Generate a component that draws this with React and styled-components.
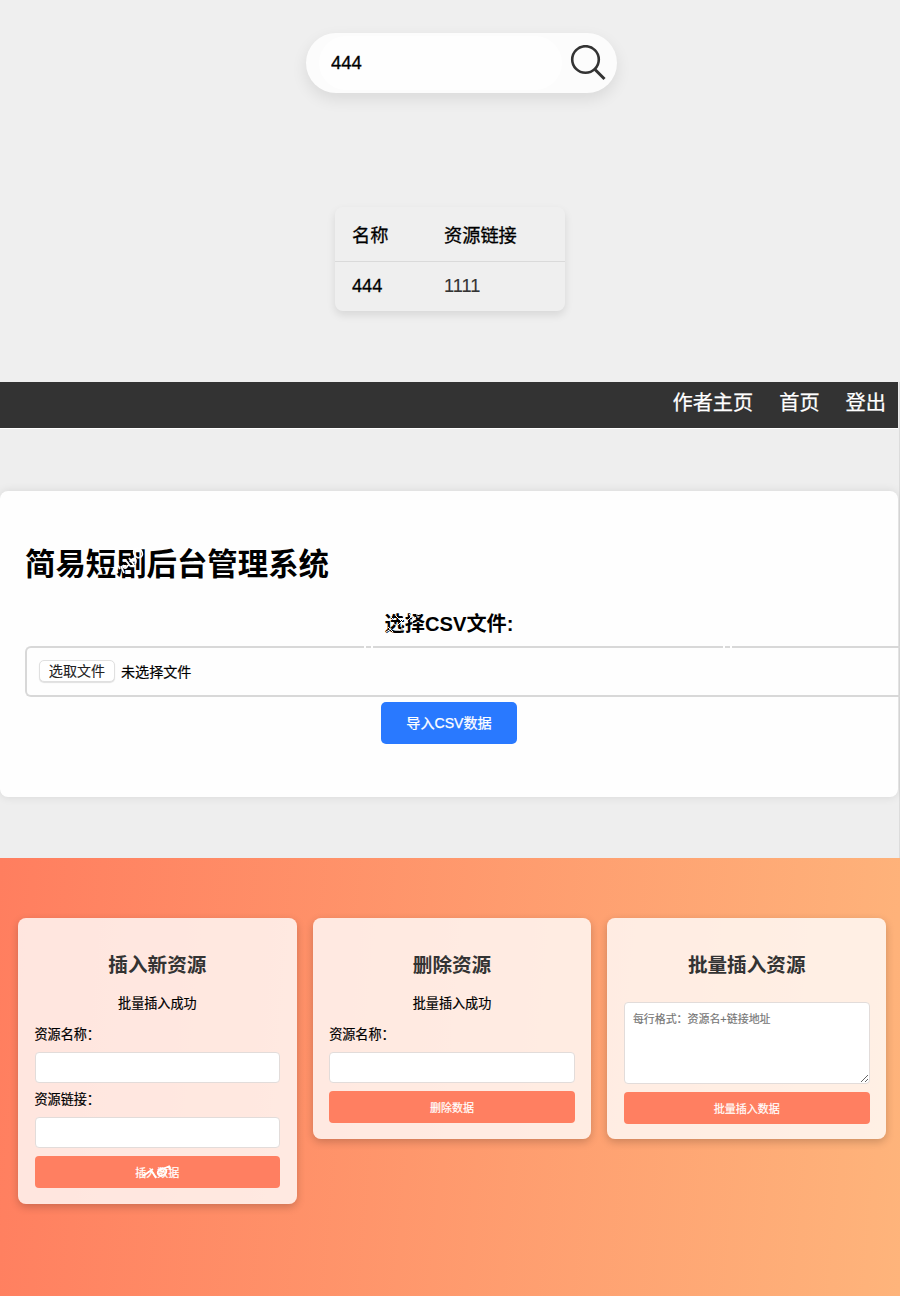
import React from 'react';
import styled, { createGlobalStyle } from 'styled-components';

const Global = createGlobalStyle`
  * { box-sizing: border-box; }
  body { margin: 0; background: #efefef; font-family: "Liberation Sans", "Noto Sans CJK SC", sans-serif; color: #000; }
  h1, h2, p { margin: 0; }
  input, button, textarea { font-family: inherit; }
`;

const Page = styled.main`
  width: 900px;
  height: 1296px;
  overflow: hidden;
`;

const SearchSection = styled.section`
  height: 382px;
  padding-top: 33px;
  background: #efefef;
`;

const SearchBar = styled.div`
  width: 311px;
  height: 60px;
  margin-left: 306px;
  padding: 0 11px 0 13px;
  display: flex;
  align-items: center;
  justify-content: space-between;
  border-radius: 30px;
  background: #fcfcfc;
  box-shadow: 0 6px 16px rgba(0, 0, 0, 0.09);
`;

const SearchInput = styled.input`
  width: 243px;
  height: 54px;
  border: 0;
  outline: 0;
  border-radius: 27px;
  padding: 0 12px;
  background: #fefefe;
  font-size: 18.5px;
  -webkit-text-stroke: 0.3px #000;
`;

const SearchIcon = styled.svg`
  width: 36px;
  height: 36px;
  fill: none;
  stroke: #333;
  stroke-width: 2.6;
`;

const ResultTable = styled.div`
  width: 230px;
  margin: 114px 0 0 335px;
  border-radius: 8px;
  box-shadow: 0 4px 8px rgba(0, 0, 0, 0.1);
`;

const ResultRow = styled.div`
  display: grid;
  grid-template-columns: 92px 1fr;
  align-items: center;
  height: ${p => (p.$head ? 55 : 49)}px;
  padding: 0 0 1px 17px;
  border-bottom: ${p => (p.$head ? '1px solid #dadada' : '0')};
  font-size: 18.2px;
`;

const Cell = styled.span`
  color: ${p => (p.$soft ? '#333' : '#000')};
  -webkit-text-stroke: ${p => (p.$soft ? '0.1px #333' : '0.3px #000')};
`;

const AdminSection = styled.section`
  height: 476px;
  padding-right: 1px;
  border-right: 1px solid #dcdcdc;
  background: #eee;
`;

const NavBar = styled.nav`
  height: 47px;
  display: flex;
  justify-content: flex-end;
  gap: 26px;
  padding: 6px 12px 0 0;
  border-bottom: 1px solid #fff;
  background: #333;
  color: #fff;
  font-size: 20.2px;
  line-height: 30px;
  -webkit-text-stroke: 0.25px #fff;
`;

const AdminPanel = styled.div`
  height: 306px;
  margin-top: 62px;
  padding: 48px 0 0 25px;
  border-radius: 8px;
  background: #fefefe;
  box-shadow: 0 0 10px rgba(0, 0, 0, 0.1);
`;

const AdminTitle = styled.h1`
  position: relative;
  font-size: 30.4px;
  line-height: 50px;
  height: 48px;
`;

const CsvForm = styled.div`
  display: flex;
  flex-direction: column;
  align-items: center;
  margin-top: 22px;
`;

const CsvLabel = styled.label`
  position: relative;
  margin-right: 25px;
  font-size: 20.2px;
  font-weight: 700;
  line-height: 30px;
`;

const FileField = styled.div`
  position: relative;
  align-self: stretch;
  display: flex;
  align-items: center;
  height: 51px;
  margin: 7px -2px 5px 0;
  padding: 0 0 1px 12px;
  border: 2px solid #d8d8d8;
  border-right: 0;
  border-radius: 6px 0 0 6px;
  font-size: 14.1px;
  -webkit-text-stroke: 0.2px #000;
`;

const FileButton = styled.button`
  width: 76px;
  height: 22px;
  margin-right: 6px;
  padding: 0;
  border: 1px solid #e0e0e0;
  border-radius: 5px;
  background: #fff;
  box-shadow: 0 1px 1px rgba(0, 0, 0, 0.12);
  font-size: 14.1px;
  line-height: 20px;
  color: #222;
  -webkit-text-stroke: 0.1px #222;
`;

const ImportButton = styled.button`
  width: 136px;
  height: 42px;
  margin-right: 25px;
  padding: 0 0 2px;
  border: 0;
  border-radius: 5px;
  background: #2979ff;
  color: #fff;
  font-size: 14.1px;
  -webkit-text-stroke: 0.25px #fff;
`;

const ManageSection = styled.section`
  height: 438px;
  display: flex;
  align-items: flex-start;
  gap: 16px;
  padding: 60px 0 0 18px;
  background: linear-gradient(95deg, #ff7e5f, #feb47b);
`;

const Card = styled.article`
  width: 278.7px;
  height: ${p => p.$height}px;
  padding: 31px 16.5px 0;
  display: flex;
  flex-direction: column;
  border-radius: 8px;
  background: rgba(255, 255, 255, 0.8);
  box-shadow: 0 3px 8px rgba(0, 0, 0, 0.2);
`;

const CardTitle = styled.h2`
  color: #333;
  text-align: center;
  font-size: 19.6px;
  line-height: 32px;
`;

const Message = styled.p`
  height: 20px;
  margin: 13px 0 11px;
  text-align: center;
  font-size: 13.1px;
  line-height: 20px;
  -webkit-text-stroke: 0.2px #000;
`;

const FieldLabel = styled.label`
  height: 20px;
  font-size: 13.1px;
  line-height: 20px;
  -webkit-text-stroke: 0.2px #000;
`;

const TextInput = styled.input`
  flex: none;
  width: 100%;
  height: 31px;
  margin: 7px 0 ${p => p.$after}px;
  border: 1px solid #e2dcda;
  border-radius: 4px;
  background: #fff;
`;

const BatchInput = styled.textarea`
  flex: none;
  width: 100%;
  height: 82px;
  margin: 21px 0 8px;
  padding: 8px;
  border: 1px solid #e2dcda;
  border-radius: 4px;
  background: #fff;
  font-size: 10.95px;
  line-height: 16px;
  &::placeholder { color: #757575; -webkit-text-stroke: 0.15px #757575; }
`;

const ActionButton = styled.button`
  position: relative;
  flex: none;
  width: 100%;
  height: 32px;
  padding: 0 0 1px;
  border: 0;
  border-radius: 4px;
  background: #ff7f61;
  color: #fff;
  font-size: 11px;
  -webkit-text-stroke: 0.2px #fff;
`;

const Scratch = styled.svg`
  position: absolute;
  left: ${p => p.$x}px;
  top: ${p => p.$y}px;
  fill: none;
  stroke: #fff;
  stroke-width: ${p => p.$weight || 1.8};
`;

const BorderGap = styled.i`
  position: absolute;
  top: -2px;
  left: ${p => p.$x}px;
  width: 9px;
  height: 2px;
  border: solid #fefefe;
  border-width: 0 2px;
`;

export default function App() {
  return (
    <Page>
      <Global />
      <SearchSection>
        <SearchBar>
          <SearchInput defaultValue="444" />
          <SearchIcon viewBox="0 0 36 36">
            <circle cx="15.5" cy="14.5" r="13.3" />
            <path d="M25 24.5 34.5 34" strokeWidth="3" />
          </SearchIcon>
        </SearchBar>
        <ResultTable>
          <ResultRow $head><Cell>名称</Cell><Cell>资源链接</Cell></ResultRow>
          <ResultRow><Cell>444</Cell><Cell $soft>1111</Cell></ResultRow>
        </ResultTable>
      </SearchSection>
      <AdminSection>
        <NavBar><span>作者主页</span><span>首页</span><span>登出</span></NavBar>
        <AdminPanel>
          <AdminTitle>
            简易短剧后台管理系统
            <Scratch $x={82} $y={7} width="44" height="34" viewBox="0 0 44 34">
              <path d="M4 27l4 1M8 24l3 3M13 23l-2-4M14 20l3 7M16 15c3-2 5 2 7 5M17 19c-2 3 2 5 4 0M22 12l5 7M23 16c3-6 8-3 5 2" />
              <ellipse cx="31" cy="7" rx="4" ry="5" transform="rotate(-35 31 7)" />
            </Scratch>
          </AdminTitle>
          <CsvForm>
            <CsvLabel>
              选择CSV文件:
              <Scratch $x={0} $y={0} $weight={1} width="42" height="30" viewBox="0 0 42 30">
                <path d="M1 23l5-3M3 18l5 5M8 14l4 3M6 8l3 3M11 7l6 6M13 16l6-6M12 20l3 1M17 6l6 8M19 15l7-7M24 5l4 5M27 13l4-5M31 6l5-1M16 19l5 1" />
              </Scratch>
            </CsvLabel>
            <FileField>
              <FileButton>选取文件</FileButton><span>未选择文件</span>
              <BorderGap $x={337} /><BorderGap $x={696} />
            </FileField>
            <ImportButton>导入CSV数据</ImportButton>
          </CsvForm>
        </AdminPanel>
      </AdminSection>
      <ManageSection>
        <Card $height={286}>
          <CardTitle>插入新资源</CardTitle>
          <Message>批量插入成功</Message>
          <FieldLabel>资源名称：</FieldLabel>
          <TextInput $after={7} />
          <FieldLabel>资源链接：</FieldLabel>
          <TextInput $after={8} />
          <ActionButton>
            插入数据
            <Scratch $x={106} $y={7} width="36" height="18" viewBox="0 0 36 18">
              <path d="M2 13l10-7M7 9c4-2 5 1 8 6M24 5l5-2M27 3l2 3M20 9l3-1" />
              <ellipse cx="21" cy="9" rx="4.5" ry="3.3" transform="rotate(-25 21 9)" />
            </Scratch>
          </ActionButton>
        </Card>
        <Card $height={221}>
          <CardTitle>删除资源</CardTitle>
          <Message>批量插入成功</Message>
          <FieldLabel>资源名称：</FieldLabel>
          <TextInput $after={8} />
          <ActionButton>删除数据</ActionButton>
        </Card>
        <Card $height={221}>
          <CardTitle>批量插入资源</CardTitle>
          <BatchInput placeholder="每行格式：资源名+链接地址" />
          <ActionButton>批量插入数据</ActionButton>
        </Card>
      </ManageSection>
    </Page>
  );
}
